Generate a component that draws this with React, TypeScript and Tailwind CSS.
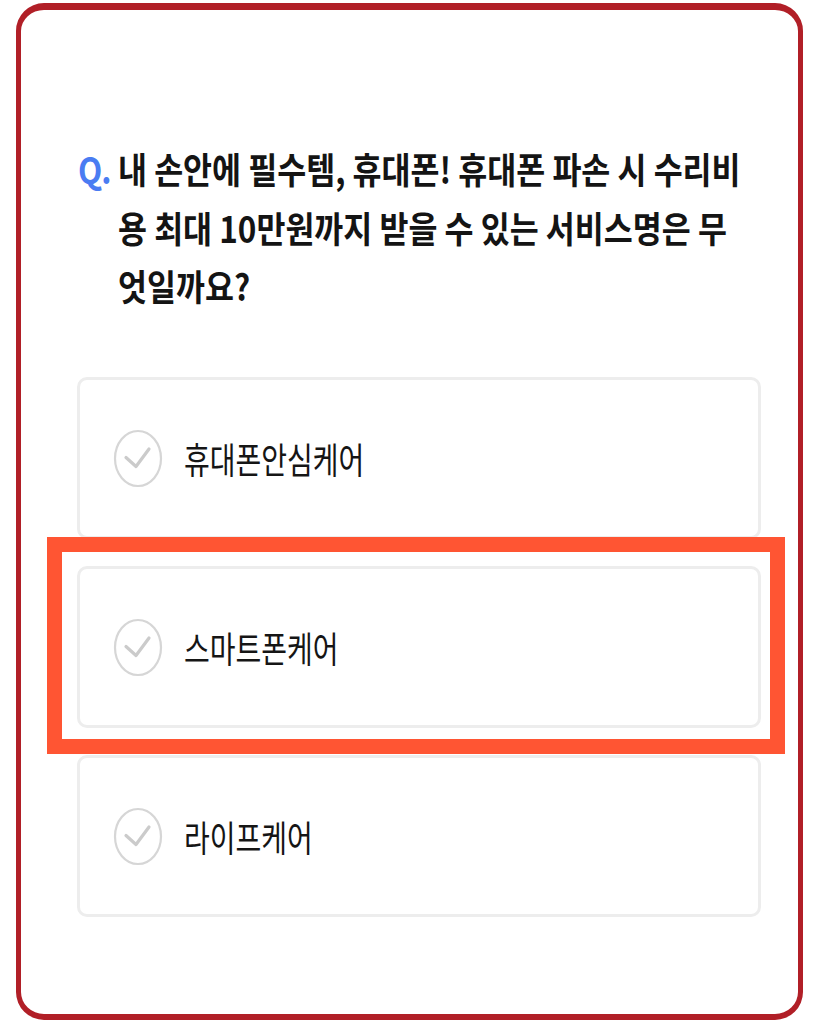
const options = ["휴대폰안심케어", "스마트폰케어", "라이프케어"];

function CheckCircle() {
  return (
    <svg width="50" height="59" viewBox="0 0 50 59" className="shrink-0">
      <ellipse cx="25" cy="29.5" rx="23" ry="27.5" fill="none" stroke="#d6d6d6" strokeWidth="2.2" />
      <path d="M13 28.5 L23 37.5 L36 20" fill="none" stroke="#cbcbcb" strokeWidth="3.2" strokeLinecap="round" strokeLinejoin="round" />
    </svg>
  );
}

function Option({ label, highlighted }: { label: string; highlighted?: boolean }) {
  return (
    <div className="relative">
      <div className="h-[162px] rounded-[10px] border-[3px] border-[#ededed] bg-white flex items-center pl-[33px] gap-[21px]">
        <CheckCircle />
        <span className="text-[28px] text-[#151515] scale-y-[1.3] leading-none">{label}</span>
      </div>
      {highlighted && (
        <div className="absolute -left-[30px] -right-[24px] -top-[29px] -bottom-[26px] border-[15px] border-[#ff5533] z-10" />
      )}
    </div>
  );
}

export default function App() {
  return (
    <div
      className="w-[819px] h-[1024px] bg-white pt-[3px] px-[16px]"
      style={{ fontFamily: '"Noto Sans CJK KR", "Noto Sans", sans-serif' }}
    >
      <div className="h-[1017px] rounded-[28px] border-[5px] border-t-[7px] border-b-[6px] border-[#b11f27] bg-white pt-[130px] pl-[56px] pr-[37px]">
        <div className="flex origin-top scale-y-[1.14] text-[31.5px] font-bold leading-[51px] text-[#141414] pl-[1px]">
          <span className="text-[#4a7cf2] w-[40px] shrink-0 tracking-[-1px]">Q.</span>
          <p className="w-[636px] break-all">내 손안에 필수템, 휴대폰! 휴대폰 파손 시 수리비용 최대 10만원까지 받을 수 있는 서비스명은 무엇일까요?</p>
        </div>

        <div className="mt-[84px] flex flex-col gap-[27px]">
          <Option label={options[0]} />
          <Option label={options[1]} highlighted />
          <Option label={options[2]} />
        </div>
      </div>
    </div>
  );
}
